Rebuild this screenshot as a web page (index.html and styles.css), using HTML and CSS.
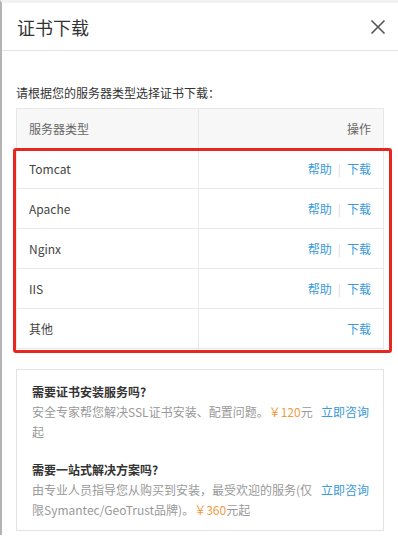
FILE: index.html
```html
<!DOCTYPE html>
<html lang="zh">
<head>
<meta charset="utf-8">
<title>证书下载</title>
<link rel="stylesheet" href="styles.css">
</head>
<body>
<div class="frame">
  <div class="header">
    <span class="title">证书下载</span>
    <svg class="close" width="16" height="16" viewBox="0 0 16 16"><path d="M1.5 1.5 L14.5 14.5 M14.5 1.5 L1.5 14.5" stroke="#555" stroke-width="1.6" fill="none"/></svg>
  </div>
  <div class="content">
    <p class="intro">请根据您的服务器类型选择证书下载：</p>
    <div class="table-wrap">
      <table class="tbl">
        <thead>
          <tr><th class="c1">服务器类型</th><th class="c2">操作</th></tr>
        </thead>
        <tbody>
          <tr><td class="c1">Tomcat</td><td class="c2"><a class="lnk">帮助</a><span class="sep">|</span><a class="lnk">下载</a></td></tr>
          <tr><td class="c1">Apache</td><td class="c2"><a class="lnk">帮助</a><span class="sep">|</span><a class="lnk">下载</a></td></tr>
          <tr><td class="c1">Nginx</td><td class="c2"><a class="lnk">帮助</a><span class="sep">|</span><a class="lnk">下载</a></td></tr>
          <tr><td class="c1">IIS</td><td class="c2"><a class="lnk">帮助</a><span class="sep">|</span><a class="lnk">下载</a></td></tr>
          <tr><td class="c1">其他</td><td class="c2"><a class="lnk">下载</a></td></tr>
        </tbody>
      </table>
      <div class="highlight"></div>
    </div>
    <div class="service">
      <div class="item">
        <div class="item-text">
          <div class="item-title">需要证书安装服务吗?</div>
          <div class="item-desc">安全专家帮您解决SSL证书安装、配置问题。<span class="price">￥120</span>元起</div>
        </div>
        <a class="consult">立即咨询</a>
      </div>
      <div class="item item2">
        <div class="item-text">
          <div class="item-title">需要一站式解决方案吗?</div>
          <div class="item-desc">由专业人员指导您从购买到安装，最受欢迎的服务(仅限Symantec/GeoTrust品牌)。<span class="price">￥360</span>元起</div>
        </div>
        <a class="consult">立即咨询</a>
      </div>
    </div>
  </div>
</div>
</body>
</html>
```

FILE: styles.css
```css
html, body {
  margin: 0;
  padding: 0;
  background: #fff;
}
body {
  font-family: "Noto Sans CJK SC", "Noto Sans", sans-serif;
  font-size: 12px;
  color: #333;
  width: 398px;
  height: 538px;
  overflow: hidden;
}
.frame {
  border-top: 3px solid #f2f2f2;
  border-left: 2px solid #b4b4b4;
  height: 535px;
  box-sizing: border-box;
}
.header {
  height: 47px;
  border-bottom: 1px solid #e3e3e3;
  display: flex;
  align-items: center;
  justify-content: space-between;
  padding: 0 12px 0 15px;
}
.title {
  font-size: 18px;
  color: #333;
  line-height: 24px;
}
.close {
  display: block;
}
.content {
  padding: 0 14px;
}
.intro {
  margin: 32px 0 5px 0;
  line-height: 20px;
  color: #333;
}
.table-wrap {
  position: relative;
}
.tbl {
  width: 100%;
  border-collapse: collapse;
  table-layout: fixed;
}
.tbl th, .tbl td {
  border: 1px solid #e8e8e8;
  height: 40px;
  padding: 0 12px;
  font-weight: normal;
  line-height: 20px;
  box-sizing: border-box;
}
.tbl th {
  background: #f7f7f7;
  color: #666;
}
.tbl td {
  color: #444;
}
.c1 { text-align: left; width: 182px; }
.c2 { text-align: right; }
.lnk {
  color: #3b9ad9;
}
.sep {
  color: #ddd;
  margin: 0 6px;
}
.highlight {
  position: absolute;
  left: -3px;
  top: 40px;
  width: 379px;
  height: 205px;
  box-sizing: border-box;
  border: 3px solid #e6261f;
  border-radius: 3px;
}
.service {
  margin-top: 20px;
  border: 1px solid #e3e3e3;
  padding: 12px 14px 9px 15px;
  height: 162px;
  box-sizing: border-box;
}
.item {
  display: flex;
  align-items: flex-start;
}
.item2 {
  margin-top: 18px;
}
.item-text {
  width: 283px;
  line-height: 20px;
}
.item-title {
  font-weight: bold;
  color: #333;
}
.item-desc {
  color: #999;
}
.price {
  color: #f29b3e;
}
.consult {
  margin-left: 6px;
  margin-top: 20px;
  line-height: 20px;
  color: #3b9ad9;
  white-space: nowrap;
}
```
